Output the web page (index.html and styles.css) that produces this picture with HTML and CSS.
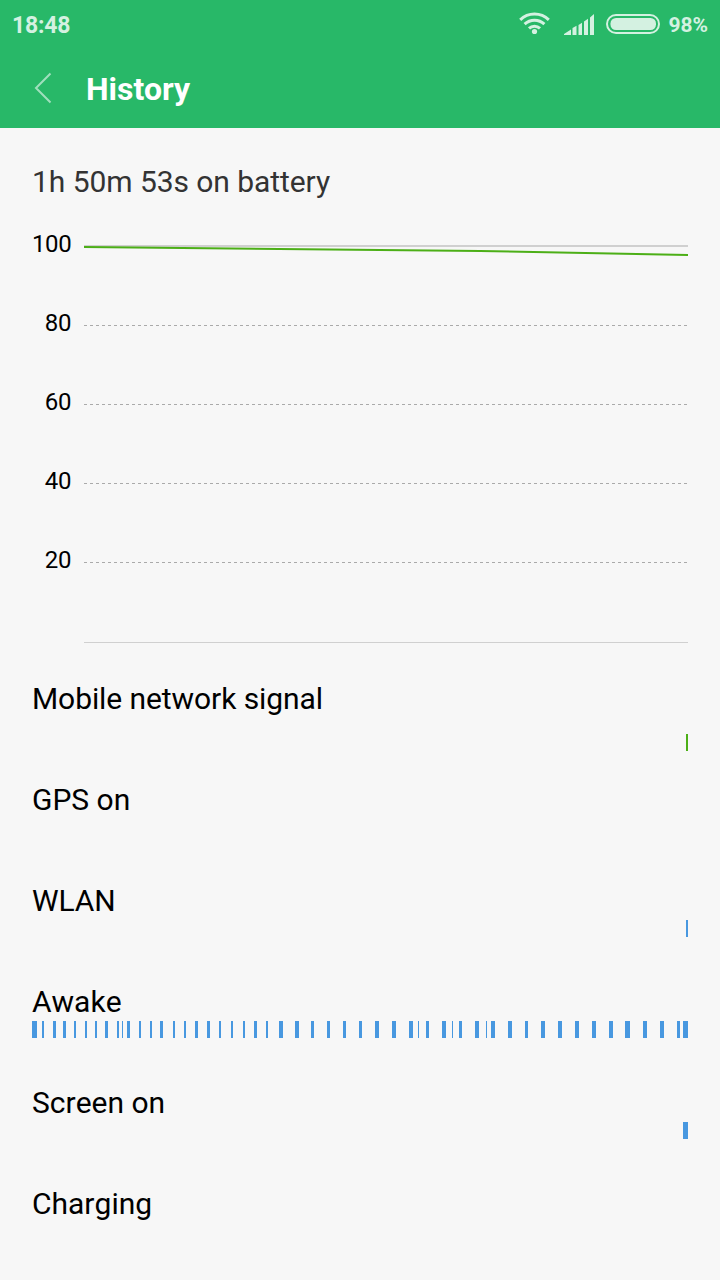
FILE: index.html
```html
<!DOCTYPE html>
<html lang="en">
<head>
    <meta charset="UTF-8">
    <title>History</title>
    <link rel="stylesheet" href="styles.css">
</head>
<body>
<div class="header">
    <div class="status">
        <span class="time">18:48</span>
        <svg class="wifi" width="32" height="24" viewBox="0 0 32 24" fill="none" stroke="#d4f1e1" stroke-width="3">
            <path d="M1.200 8.800a20.800 20.800 0 0 1 28.600 0"/>
            <path d="M5.600 13.200a14.400 14.400 0 0 1 19.800 0"/>
            <path d="M10 17.400a8 8 0 0 1 11 0"/>
            <circle cx="15.500" cy="20.500" r="2.600" fill="#d4f1e1" stroke="none"/>
        </svg>
        <svg class="signal" width="30" height="21" viewBox="0 0 30 21" fill="#d4f1e1">
            <path d="M0 21v-1l7-4.500v5.500zM8.500 21v-7l4-2.300v9.300zM14.500 21v-10l3.500-2.300v12.300zM20 21v-13.500l4-2.700v16.200zM26 21v-17.500l4-3.500v21z"/>
        </svg>
        <svg class="battery" width="54" height="20" viewBox="0 0 54 20">
            <rect x="1" y="1" width="52" height="18" rx="9" fill="none" stroke="#d4f1e1" stroke-width="2"/>
            <rect x="4.500" y="4" width="45.500" height="12" rx="5.500" fill="#d4f1e1"/>
        </svg>
        <span class="percent">98%</span>
    </div>
    <div class="title-bar">
        <svg class="back" width="18" height="32" viewBox="0 0 18 32" fill="none" stroke="#a0dfbd" stroke-width="2">
            <path d="M16.500 1.500L2 16L16.500 30.500"/>
        </svg>
        <h1>History</h1>
    </div>
</div>
<div class="wrap">
    <p class="summary">1h 50m 53s on battery</p>
    <div class="chart">
        <div class="axis">
            <span>100</span>
            <span>80</span>
            <span>60</span>
            <span>40</span>
            <span>20</span>
        </div>
        <svg class="plot" width="604" height="400" viewBox="0 0 604 400">
            <path class="top-line" d="M0 2H604"/>
            <path class="grid" d="M0 81.500H604M0 160.500H604M0 239.500H604M0 318.500H604"/>
            <path class="bottom-line" d="M0 398.500H604"/>
            <path class="level" d="M0 3L396 7L604 11"/>
        </svg>
    </div>
    <div class="row row-signal">
        <span>Mobile network signal</span>
        <svg class="track green" data-bars="654,2"></svg>
    </div>
    <div class="row">
        <span>GPS on</span>
        <svg class="track"></svg>
    </div>
    <div class="row">
        <span>WLAN</span>
        <svg class="track" data-bars="654,2"></svg>
    </div>
    <div class="row">
        <span>Awake</span>
        <svg class="track" data-bars="0,5 10,2 21,3 31,3 42,2 53,2 63,2 73,3 85,2 90,1 95,3 107,2 118,2 128,3 141,2 152,2 163,3 175,3 187,2 199,2 211,2 222,3 234,2 247,4 263,4 279,3 295,3 311,3 327,3 343,4 360,4 377,4 386,1 394,3 410,4 420,1 427,3 443,4 454,1 459,4 476,4 493,3 509,4 526,4 543,4 560,4 577,4 593,5 611,4 628,4 645,3 651,5"></svg>
    </div>
    <div class="row">
        <span>Screen on</span>
        <svg class="track" data-bars="651,5"></svg>
    </div>
    <div class="row">
        <span>Charging</span>
        <svg class="track"></svg>
    </div>
</div>
<script>
    // data-bars: "start,width" pairs
    var tracks = document.querySelectorAll('.track[data-bars]');
    for(var i = 0;i<tracks.length;i++){
        var bars = tracks[i].getAttribute('data-bars').split(' ');
        for(var j = 0;j<bars.length;j++){
            var bar = bars[j].split(',');
            var rect = document.createElementNS('http://www.w3.org/2000/svg','rect');
            rect.setAttribute('x',bar[0]);
            rect.setAttribute('width',bar[1]);
            rect.setAttribute('height',17);
            tracks[i].appendChild(rect);
        }
    }
</script>
</body>
</html>
```
FILE: styles.css
```css
*{
    box-sizing: border-box;
    margin: 0;
    padding: 0;
}
body{
    height: 1280px;
    overflow: hidden;
    background: #f7f7f7;
    color: #000;
    font-family: Roboto, sans-serif;
}
svg{
    display: block;
    flex: none;
}
.header{
    height: 128px;
    background: #28b868;
}
.status{
    display: flex;
    align-items: flex-start;
    height: 50px;
    padding: 0 12px;
    color: #d4f1e1;
    font-weight: bold;
    line-height: 50px;
}
.time{
    margin-right: auto;
    font-size: 23px;
    letter-spacing: -0.2px;
    line-height: 52px;
}
.wifi{
    margin: 11px 13px 0 0;
}
.signal{
    margin: 14px 12px 0 0;
}
.battery{
    margin: 14px 8px 0 0;
}
.percent{
    font-size: 21px;
}
.title-bar{
    display: flex;
    align-items: center;
    height: 78px;
    padding-left: 34px;
}
.back{
    margin-bottom: 2px;
}
.title-bar h1{
    margin-left: 34px;
    color: #fff;
    font-size: 32px;
    line-height: 40px;
}
.wrap{
    padding: 34px 32px 0;
}
.summary{
    height: 82px;
    color: #333;
    font-size: 30px;
    letter-spacing: -0.06px;
    line-height: 40px;
}
.chart{
    display: flex;
    justify-content: space-between;
    height: 435px;
}
.axis{
    width: 39px;
    text-align: right;
    font-size: 24px;
    letter-spacing: -0.4px;
}
.axis span{
    display: block;
    height: 79px;
    line-height: 1px;
}
.grid,
.top-line,
.bottom-line,
.level{
    fill: none;
    stroke: #d0d0d0;
}
.grid{
    stroke: #aaa;
    stroke-dasharray: 3 3;
}
.top-line{
    stroke-width: 2;
}
.level{
    stroke: #4caf17;
    stroke-width: 2;
}
.row{
    height: 101px;
    font-size: 30px;
    font-kerning: none;
}
.row span{
    display: block;
    height: 39px;
    line-height: 40px;
}
.row-signal span{
    height: 55px;
    letter-spacing: -0.08px;
}
.track{
    width: 656px;
    height: 17px;
    fill: #4898e0;
}
.green{
    fill: #4caf17;
}
```
